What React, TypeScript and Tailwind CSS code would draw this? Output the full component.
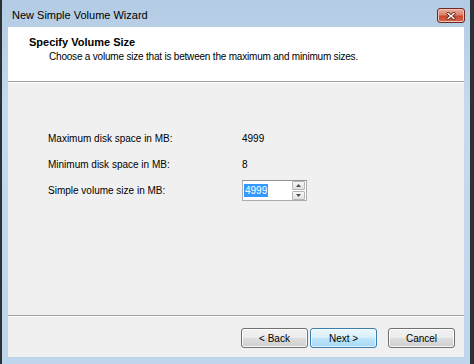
import { FC } from "react";

const font = { fontFamily: '"Liberation Sans", Arial, sans-serif' };

const WinButton: FC<{ label: string; primary?: boolean }> = ({ label, primary }) => (
  <div
    className={
      primary
        ? "flex h-[20px] w-[67px] items-center justify-center rounded-[3px] border border-[#3c7fb1] bg-[linear-gradient(#eaf6fd_0%,#d9f0fc_50%,#bee6fd_51%,#a7d9f5_100%)] text-[10px] text-black shadow-[inset_0_0_0_1px_#ffffffaa]"
        : "flex h-[20px] w-[67px] items-center justify-center rounded-[3px] border border-[#707070] bg-[linear-gradient(#f2f2f2_0%,#ebebeb_50%,#dddddd_51%,#cfcfcf_100%)] text-[10px] text-black shadow-[inset_0_0_0_1px_#ffffffcc]"
    }
  >
    {label}
  </div>
);

const SpinButton: FC<{ up?: boolean }> = ({ up }) => (
  <div className="flex h-[9px] w-[13px] items-center justify-center rounded-[1px] border border-[#b5b5b5] bg-[linear-gradient(#f6f6f6,#e2e2e2)]">
    <svg width="5" height="3" viewBox="0 0 5 3">
      {up ? <path d="M0 3 L2.5 0 L5 3 Z" fill="#4d4d4d" /> : <path d="M0 0 L5 0 L2.5 3 Z" fill="#4d4d4d" />}
    </svg>
  </div>
);

export default function App() {
  return (
    <div className="flex h-[364px] w-[474px] bg-[#2c3136]" style={font}>
      <div className="w-[2px]" />
      <div className="flex w-[468px] flex-col bg-[linear-gradient(#b3cbe4,#c6daee_30%,#bfd5ec)]">
        {/* title bar */}
        <div className="flex h-[27px] items-start justify-between pl-[10px] pr-[5px]">
          <span className="pt-[9px] text-[11px] leading-[13px] text-black">New Simple Volume Wizard</span>
          <div className="mt-[8px] flex h-[15px] w-[28px] items-center justify-center rounded-[3px] border border-[#6e2a20] bg-[linear-gradient(#eab0a3_0%,#dc8069_45%,#c9472d_55%,#d66a50_100%)] shadow-[inset_0_0_0_1px_#f3c0b5]">
            <svg width="10" height="8" viewBox="0 0 10 8">
              <path d="M1 0.5 L9 7.5 M9 0.5 L1 7.5" stroke="#5a1a10" strokeWidth="3" />
              <path d="M1.5 1 L8.5 7 M8.5 1 L1.5 7" stroke="#ffffff" strokeWidth="1.6" />
            </svg>
          </div>
        </div>
        {/* client area */}
        <div className="mx-[6px] flex h-[330px] w-[456px] flex-col bg-[#f0f0f0]">
          <div className="h-[54px] bg-white pl-[21px] pt-[9px]">
            <div className="text-[11px] font-bold leading-[13px] text-black">Specify Volume Size</div>
            <div className="pl-[20px] pt-px text-[10px] leading-[13px] tracking-[-0.2px] text-black">
              Choose a volume size that is between the maximum and minimum sizes.
            </div>
          </div>
          <div className="h-px bg-[#a0a0a0]" />
          <div className="h-px bg-white" />
          <div className="flex flex-1 flex-col gap-[12px] pl-[40px] pt-[48px] text-[10px] text-black">
            <div className="flex h-[14px] items-center">
              <span className="w-[194px]">Maximum disk space in MB:</span>
              <span>4999</span>
            </div>
            <div className="flex h-[14px] items-center">
              <span className="w-[194px]">Minimum disk space in MB:</span>
              <span>8</span>
            </div>
            <div className="flex h-[14px] items-center">
              <span className="w-[194px]">Simple volume size in MB:</span>
              <div className="flex h-[21px] w-[65px] items-center border border-[#abadb3] border-t-[#8f939b] bg-white pl-[1px] pr-[1px]">
                <span className="flex-1">
                  <span className="bg-[#3399ff] px-[1px] py-px text-white">4999</span>
                </span>
                <div className="flex flex-col gap-px">
                  <SpinButton up />
                  <SpinButton />
                </div>
              </div>
            </div>
          </div>
          <div className="h-px bg-[#a0a0a0]" />
          <div className="h-px bg-white" />
          <div className="flex h-[40px] items-start pl-[233px] pt-[11px]">
            <WinButton label="< Back" />
            <div className="w-[2px]" />
            <WinButton label="Next >" primary />
            <div className="w-[11px]" />
            <WinButton label="Cancel" />
          </div>
        </div>
        <div className="flex-1" />
      </div>
      <div className="flex-1" />
    </div>
  );
}
